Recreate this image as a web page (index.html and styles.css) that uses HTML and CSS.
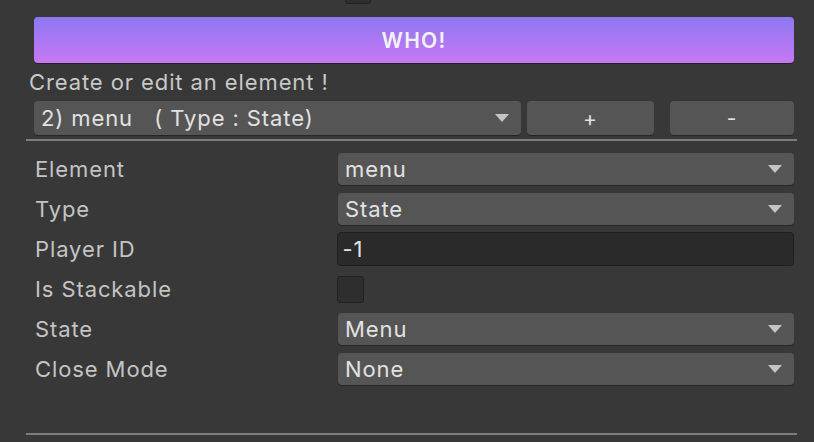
FILE: index.html
```html
<!DOCTYPE html>
<html>
<head>
<meta charset="utf-8">
<link rel="stylesheet" href="styles.css">
</head>
<body>
<div class="panel">
  <div class="top-row">
    <span class="top-label">Is Persistent</span>
    <span class="top-check"></span>
  </div>
  <div class="who">WHO!</div>
  <div class="caption">Create or edit an element !</div>
  <div class="select-row">
    <div class="dd main-dd"><span>2) menu&nbsp;&nbsp;&nbsp;( Type : State)</span><i class="arrow"></i></div>
    <div class="btn plus">+</div>
    <div class="btn minus">-</div>
  </div>
  <div class="sep"></div>
  <div class="fields">
    <div class="row"><span class="label">Element</span><div class="dd field"><span>menu</span><i class="arrow"></i></div></div>
    <div class="row"><span class="label">Type</span><div class="dd field"><span>State</span><i class="arrow"></i></div></div>
    <div class="row"><span class="label">Player ID</span><div class="input field"><span>-1</span></div></div>
    <div class="row"><span class="label">Is Stackable</span><div class="check"></div></div>
    <div class="row"><span class="label">State</span><div class="dd field"><span>Menu</span><i class="arrow"></i></div></div>
    <div class="row"><span class="label">Close Mode</span><div class="dd field"><span>None</span><i class="arrow"></i></div></div>
  </div>
  <div class="sep bottom"></div>
</div>
</body>
</html>
```
FILE: styles.css
```css
html, body {
  margin: 0;
  padding: 0;
  background: #383838;
  width: 814px;
  height: 442px;
  overflow: hidden;
  font-family: Inter, "Noto Sans", sans-serif;
  letter-spacing: 0.9px;
}
.panel {
  padding: 0 20px 0 34px;
}
.top-row {
  margin-top: -27px;
  height: 32px;
  display: flex;
  align-items: flex-end;
}
.top-label {
  color: #c4c4c4;
  font-size: 22px;
  width: 311px;
  line-height: 30px;
}
.top-check {
  width: 26px;
  height: 26px;
  box-sizing: border-box;
  background: #2d2d2d;
  border: 1px solid #222;
  border-radius: 3px;
  margin-bottom: 1px;
}
.who {
  margin-top: 12px;
  height: 46px;
  border-radius: 4px;
  background: linear-gradient(180deg, #8d77f2 0%, #c878f3 100%);
  box-shadow: 0 1px 0 #232323;
  color: #f2f2f2;
  font-size: 21px;
  font-weight: 600;
  letter-spacing: 1.2px;
  display: flex;
  align-items: center;
  justify-content: center;
}
.caption {
  margin-left: -5px;
  color: #c8c8c8;
  font-size: 22px;
  height: 38px;
  line-height: 38px;
}
.select-row {
  display: flex;
  height: 34px;
}
.dd, .btn, .input {
  box-sizing: border-box;
  background: #555555;
  border-radius: 4px;
  box-shadow: 0 1px 0 #262626;
  color: #e2e2e2;
  font-size: 22px;
  display: flex;
  align-items: center;
}
.dd span, .input span {
  padding-left: 7px;
  flex: 1;
  white-space: nowrap;
}
.main-dd {
  width: 487px;
}
.btn {
  justify-content: center;
  font-size: 21px;
}
.plus {
  margin-left: 6px;
  width: 127px;
}
.minus {
  margin-left: 16px;
  width: 124px;
}
.arrow {
  width: 0;
  height: 0;
  border-left: 7px solid transparent;
  border-right: 7px solid transparent;
  border-top: 8px solid #c4c4c4;
  margin-right: 12px;
}
.sep {
  margin: 4px -3px 0 -8px;
  height: 2px;
  background: #7c7c7c;
}
.fields {
  padding-top: 8px;
}
.row {
  display: flex;
  align-items: center;
  height: 40px;
}
.row .label {
  width: 303px;
  color: #c4c4c4;
  font-size: 22px;
  padding-left: 1px;
}
.field {
  width: 456px;
  height: 32px;
}
.input {
  background: #2a2a2a;
  border: 1px solid #1f1f1f;
  box-shadow: none;
  margin-left: -1px;
  width: 458px;
  height: 34px;
}
.input span {
  padding-left: 5px;
}
.check {
  width: 27px;
  height: 27px;
  box-sizing: border-box;
  background: #2e2e2e;
  border: 1px solid #222;
  border-radius: 3px;
  margin-left: -1px;
}
.bottom {
  margin-top: 44px;
}
```
